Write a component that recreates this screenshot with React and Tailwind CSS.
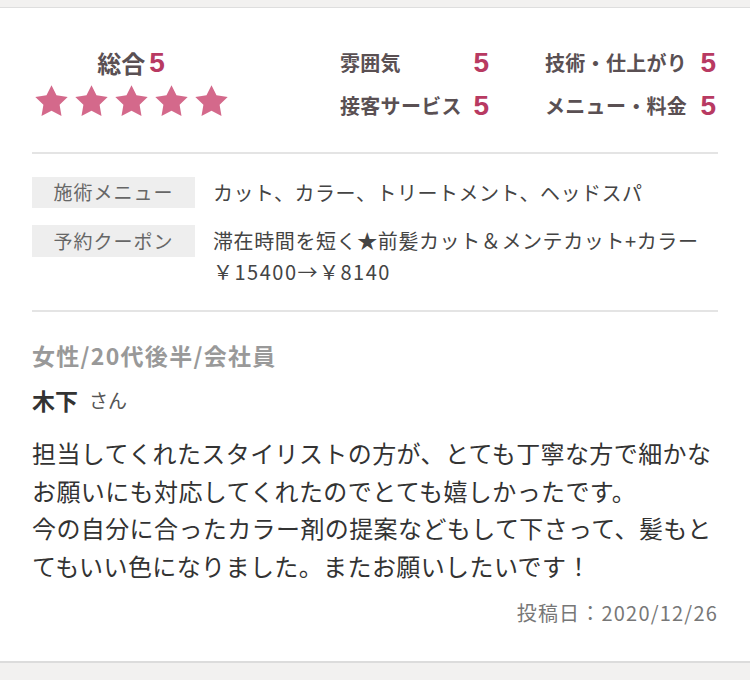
import React from "react";

const jp = { fontFamily: '"Noto Sans CJK JP", "Noto Sans", sans-serif' };
const num = { fontFamily: '"Liberation Sans", Arial, sans-serif' };

function Star() {
  return (
    <svg width="37" height="37" viewBox="0 0 24 24" className="block">
      <path
        d="M12 1.4l3.25 6.6 7.25 1.05-5.25 5.1 1.24 7.2L12 17.95l-6.49 3.4 1.24-7.2-5.25-5.1 7.25-1.05z"
        fill="#d4698b"
      />
    </svg>
  );
}

function Score({ label }) {
  return (
    <div className="flex h-[30px] items-center justify-between">
      <span className="text-[20px] font-bold leading-[30px] tracking-[0.3px] text-[#5a5053]">{label}</span>
      <span style={num} className="text-[28px] font-bold leading-[30px] text-[#b83a62]">5</span>
    </div>
  );
}

export default function App() {
  return (
    <div style={jp} className="min-h-[680px] bg-[#f2f1f0]">
      <div className="h-[7px]" />
      <div className="border-t border-b-2 border-t-[#dedede] border-b-[#dcdcdc] bg-white px-8">
        {/* Ratings */}
        <div className="flex h-[144px] items-start pt-[40px]">
          <div className="flex w-[198px] flex-col items-center">
            <div className="flex h-[30px] items-center gap-[4px]">
              <span className="text-[24px] font-bold leading-[30px] text-[#5a5053]">総合</span>
              <span style={num} className="text-[28px] font-bold leading-[30px] text-[#b83a62]">5</span>
            </div>
            <div className="mt-[5px] flex gap-[3px]">
              <Star />
              <Star />
              <Star />
              <Star />
              <Star />
            </div>
          </div>
          <div className="ml-[110px] grid grid-cols-[149px_171px] content-start gap-x-[56px] gap-y-[13px]">
            <Score label="雰囲気" />
            <Score label="技術・仕上がり" />
            <Score label="接客サービス" />
            <Score label="メニュー・料金" />
          </div>
        </div>
        <div className="h-[2px] bg-[#e4e4e4]" />

        {/* Info */}
        <div className="flex flex-col gap-[17px] pt-[23px] pb-[23px]">
          <div className="flex items-start">
            <div className="flex h-[31px] w-[163px] shrink-0 items-center justify-center bg-[#eeeeee] text-[19px] tracking-[1px] text-[#666]">
              施術メニュー
            </div>
            <div className="ml-[18px] text-[20px] leading-[31px] tracking-[0.5px] text-[#444]">
              カット、カラー、トリートメント、ヘッドスパ
            </div>
          </div>
          <div className="flex items-start">
            <div className="flex h-[32px] w-[163px] shrink-0 items-center justify-center bg-[#eeeeee] text-[19px] tracking-[1px] text-[#666]">
              予約クーポン
            </div>
            <div className="ml-[18px] text-[20px] leading-[31px] text-[#444]">
              <div className="tracking-[0.6px]">滞在時間を短く★前髪カット＆メンテカット+カラー</div>
              <div className="tracking-[1.5px]">￥15400→￥8140</div>
            </div>
          </div>
        </div>
        <div className="h-[2px] bg-[#e4e4e4]" />

        {/* Review */}
        <div className="pt-[27px] pb-[34px]">
          <div className="text-[23px] font-bold leading-[32px] tracking-[1.3px] text-[#999]">
            女性/20代後半/会社員
          </div>
          <div className="mt-[13px] flex h-[32px] items-center">
            <span className="text-[23px] font-bold leading-[32px] text-[#333]">木下</span>
            <span className="ml-[11px] text-[19px] leading-[32px] text-[#555]">さん</span>
          </div>
          <p className="mt-[18px] text-[24px] leading-[37.5px] tracking-[0.4px] text-[#333]">
            担当してくれたスタイリストの方が、とても丁寧な方で細かなお願いにも対応してくれたのでとても嬉しかったです。
            <br />
            今の自分に合ったカラー剤の提案などもして下さって、髪もとてもいい色になりました。またお願いしたいです！
          </p>
          <div className="mt-[15px] text-right text-[20px] leading-[28px] tracking-[1.2px] text-[#777]">
            投稿日：2020/12/26
          </div>
        </div>
      </div>
    </div>
  );
}
